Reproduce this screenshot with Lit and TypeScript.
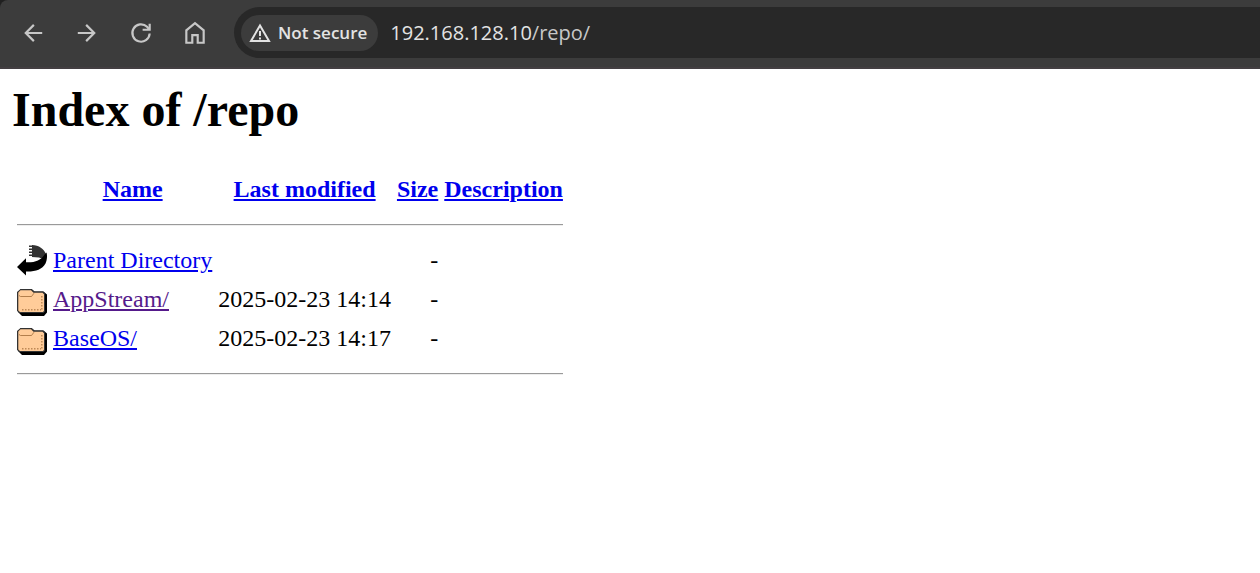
import { LitElement, html, css, svg } from "lit";
import { customElement, state } from "lit/decorators.js";

interface Entry {
  icon: "back" | "folder";
  name: string;
  href: string;
  modified: string;
  size: string;
  visited?: boolean;
}

const icons = {
  arrowLeft: svg`<path d="M20.500 12H6M12.800 4.500L5.300 12l7.500 7.500" />`,
  arrowRight: svg`<path d="M3.500 12h14.500M11.200 4.500l7.500 7.500-7.500 7.500" />`,
  reload: svg`<path d="M20 12.500a8 8 0 1 1-2.400-6.200L19.500 8.500" /><path d="M20 3.500V9H13.500" />`,
  home: svg`<path d="M4 21V9.500l8-6.500 8 6.500v11.500h-5.500v-7h-5v7z" />`,
};

@customElement("browser-bar")
export class BrowserBar extends LitElement {
  static styles = css`
    :host {
      display: block;
      background: #202020;
    }
    .bar {
      display: flex;
      align-items: center;
      gap: 24px;
      box-sizing: border-box;
      padding: 7px 0 9px 18px;
      background: #3c3c3c;
      border-top-left-radius: 8px;
      border-bottom: 2px solid #433f42;
      font-family: "Open Sans", "Noto Sans", sans-serif;
    }
    .nav {
      display: flex;
      gap: 24px;
    }
    .nav-button {
      display: grid;
      place-items: center;
      width: 30px;
      height: 30px;
      padding: 0;
      border: 0;
      background: none;
      color: #c7c7c7;
    }
    .nav-button svg {
      width: 26px;
      height: 26px;
      fill: none;
      stroke: currentColor;
      stroke-width: 2;
    }
    .address {
      display: flex;
      flex: 1;
      align-items: center;
      gap: 12px;
      height: 51px;
      padding-left: 7px;
      box-sizing: border-box;
      border-radius: 26px 0 0 26px;
      background: #282828;
    }
    .security {
      display: flex;
      align-items: center;
      gap: 7px;
      height: 36px;
      padding: 0 11px 0 8px;
      border: 0;
      border-radius: 18px;
      background: #3c3c3c;
      color: #e3e3e3;
      font: 600 17px/24px "Open Sans", "Noto Sans", sans-serif;
      white-space: nowrap;
    }
    .security svg {
      width: 22px;
      height: 22px;
      fill: none;
      stroke: currentColor;
      stroke-width: 2;
    }
    .url {
      flex: 1;
      min-width: 0;
      color: #e3e3e3;
      font-size: 20px;
      line-height: 28px;
      text-decoration: none;
    }
    .path {
      color: #c7c7c7;
    }
  `;

  render() {
    return html`
      <header class="bar">
        <nav class="nav">
          <button class="nav-button" aria-label="Back"><svg viewBox="0 0 24 24">${icons.arrowLeft}</svg></button>
          <button class="nav-button" aria-label="Forward"><svg viewBox="0 0 24 24">${icons.arrowRight}</svg></button>
          <button class="nav-button" aria-label="Reload"><svg viewBox="0 0 24 24">${icons.reload}</svg></button>
          <button class="nav-button" aria-label="Home"><svg viewBox="0 0 24 24">${icons.home}</svg></button>
        </nav>
        <div class="address">
          <button class="security">
            <svg viewBox="0 0 22 22" aria-hidden="true">
              <path d="M11 3.500L20 19H2z" />
              <path d="M11 9v5M11 15.500v2" />
            </svg>
            Not secure
          </button>
          <a class="url" href="#/repo/">192.168.128.10<span class="path">/repo/</span></a>
        </div>
      </header>
    `;
  }
}

@customElement("app-root")
export class AppRoot extends LitElement {
  static styles = css`
    :host {
      display: block;
      min-height: 100vh;
      background: #fff;
      color: #000;
      font-family: "Liberation Serif", "Times New Roman", serif;
      font-size: 24px;
      line-height: 27px;
    }
    .page {
      padding: 13px 12px;
    }
    .title {
      margin: 0 0 32px;
      font-size: 48px;
      line-height: 55px;
    }
    .listing {
      border-spacing: 3px;
      white-space: nowrap;
    }
    .listing th,
    .listing td {
      padding: 1px 1px 2px 2px;
    }
    .number {
      text-align: right;
    }
    .icon {
      display: block;
      width: 30px;
      height: 33px;
    }
    .link {
      color: #0000ee;
    }
    .visited {
      color: #551a8b;
    }
    .rule {
      margin: 12px 0;
      border: 0;
      border-top: 1px solid #9a9a9a;
      border-bottom: 1px solid #eeeeee;
    }
  `;

  @state()
  private entries: Entry[] = [
    { icon: "back", name: "Parent Directory", href: "#/", modified: "", size: "-" },
    { icon: "folder", name: "AppStream/", href: "#/repo/AppStream/", modified: "2025-02-23 14:14", size: "-", visited: true },
    { icon: "folder", name: "BaseOS/", href: "#/repo/BaseOS/", modified: "2025-02-23 14:17", size: "-" },
  ];

  private renderIcon(icon: Entry["icon"]) {
    if (icon === "back") {
      return html`<svg class="icon" viewBox="0 0 30 33" role="img" aria-label="Parent">
        <path d="M15 1c7 0 12 4 14 9l-3 5-4-1.500-7-.5z" fill="#333" />
        <path d="M14 1.500v12" stroke="#333" stroke-width="4" stroke-dasharray="1.500 1.500" fill="none" />
        <path d="M0 23L9 14.300v4c8 .5 15-1.500 19-8.300l1.500-1.500c1 3 .5 8-1 11-3.500 6-10 8.300-19.500 8v4z" fill="#000" />
      </svg>`;
    }
    return html`<svg class="icon" viewBox="0 0 30 33" role="img" aria-label="Directory">
      <path d="M3.500 6h11l3 2.500h9l3.500 3v18l-3 3.500H5l-4-4z" fill="#000" />
      <path d="M3.500 6h11l3 2.500h8.500l2 2v18l-1.500 1.500h-24L0 28V9z" fill="#333" />
      <path d="M3.500 7.200h10.500l2.500 2.500h9l1.500 1.500v16.500l-1 1.300H3L1.300 27.500V9.500z" fill="#ffcc99" />
      <path d="M2 12.500l1.500 1h11l2.500-3.300" stroke="#996633" stroke-opacity=".75" fill="none" />
      <path d="M24.800 13v14M5 26.800h19" stroke="#996633" stroke-opacity=".65" stroke-width="1.500" stroke-dasharray="1.500 1.500" fill="none" />
    </svg>`;
  }

  render() {
    return html`
      <browser-bar></browser-bar>
      <main class="page">
        <h1 class="title">Index of /repo</h1>
        <table class="listing">
          <thead>
            <tr>
              <th><span class="icon"></span></th>
              <th><a class="link" href="#name">Name</a></th>
              <th><a class="link" href="#modified">Last modified</a></th>
              <th><a class="link" href="#size">Size</a></th>
              <th><a class="link" href="#description">Description</a></th>
            </tr>
            <tr><th colspan="5"><hr class="rule" /></th></tr>
          </thead>
          <tbody>
            ${this.entries.map(
              (entry) => html`<tr>
                <td>${this.renderIcon(entry.icon)}</td>
                <td><a class="link ${entry.visited ? "visited" : ""}" href=${entry.href}>${entry.name}</a></td>
                <td class="number">${entry.modified}</td>
                <td class="number">${entry.size}</td>
                <td></td>
              </tr>`,
            )}
            <tr><th colspan="5"><hr class="rule" /></th></tr>
          </tbody>
        </table>
      </main>
    `;
  }
}
